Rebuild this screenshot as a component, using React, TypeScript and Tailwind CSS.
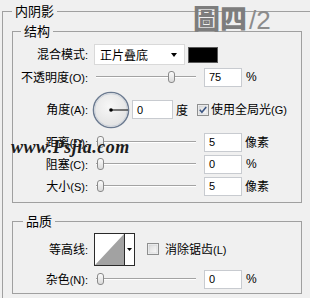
import React from "react";

const cjk = "font-['Noto_Sans_CJK_SC','Noto_Sans_CJK_TC',sans-serif]";
const latin = "font-['Liberation_Sans',sans-serif] text-[11px]";

function Label({ zh, key2 }: { zh: string; key2?: string }) {
  return (
    <span className="w-[75px] shrink-0 text-right text-[12px] leading-[14px] text-black">
      {zh}
      {key2 ? <span className={latin}>({key2})</span> : null}
      <span className={latin}>:</span>
    </span>
  );
}

function Slider({ value }: { value: number }) {
  return (
    <div className="relative flex h-[14px] w-[100px] shrink-0 items-center">
      <div className="h-[2px] w-full border-t border-[#a3a3a3] border-b border-b-white" />
      <div
        className="absolute top-[1px] h-[12px] w-[7px] rounded-[3px] border border-[#8a8a8a] bg-gradient-to-b from-[#fbfbfb] to-[#dadada]"
        style={{ left: 1 + value * 0.95 }}
      />
    </div>
  );
}

function NumBox({ v, w = "w-[38px]" }: { v: string; w?: string }) {
  return (
    <div className={`flex h-[19px] ${w} shrink-0 items-center border border-[#c8cbd0] bg-white pl-[4px] ${latin} leading-[12px]`}>
      {v}
    </div>
  );
}

function SliderRow({ zh, k, value, v, unit }: { zh: string; k: string; value: number; v: string; unit: string }) {
  return (
    <div className="flex h-[22px] items-center">
      <Label zh={zh} key2={k} />
      <div className="ml-[8px]">
        <Slider value={value} />
      </div>
      <div className="ml-[8px]">
        <NumBox v={v} />
      </div>
      <span
        className={
          unit === "%"
            ? `ml-[4px] ${latin} text-[12px]`
            : "ml-[3px] text-[12px] leading-[14px]"
        }
      >
        {unit}
      </span>
    </div>
  );
}

function CheckBox({ checked }: { checked?: boolean }) {
  return (
    <svg width="12" height="12" viewBox="0 0 12 12" className="shrink-0">
      <defs>
        <linearGradient id={checked ? "cbg1" : "cbg0"} x1="0" y1="0" x2="1" y2="1">
          <stop offset="0" stopColor="#dcdcdc" />
          <stop offset="1" stopColor="#fafafa" />
        </linearGradient>
      </defs>
      <rect x="0.5" y="0.5" width="11" height="11" fill="#f4f4f4" stroke="#8e8f8f" />
      <rect x="2" y="2" width="8" height="8" fill={`url(#${checked ? "cbg1" : "cbg0"})`} stroke="#c4c7cb" strokeWidth="0.5" />
      {checked ? (
        <path d="M2.8 5.8 L4.9 8.2 L9.2 2.9" fill="none" stroke="#3b5583" strokeWidth="1.6" />
      ) : null}
    </svg>
  );
}

function AngleDial() {
  return (
    <svg width="38" height="38" viewBox="0 0 38 38" className="shrink-0">
      <defs>
        <radialGradient id="dial" cx="0.45" cy="0.4" r="0.6">
          <stop offset="0" stopColor="#f7f7f7" />
          <stop offset="1" stopColor="#e2e2e2" />
        </radialGradient>
      </defs>
      <circle cx="19" cy="19" r="17.6" fill="url(#dial)" stroke="#6b7a90" strokeWidth="1.4" />
      <circle cx="19" cy="19" r="16.3" fill="none" stroke="#c7ced8" strokeWidth="0.8" />
      <line x1="19" y1="19" x2="36" y2="19" stroke="#000" strokeWidth="1" />
      <circle cx="19" cy="19" r="1.8" fill="#000" />
    </svg>
  );
}

function ContourPicker() {
  return (
    <div className="flex h-[33px] w-[41px] shrink-0 border border-[#2a2a2a] bg-white">
      <svg width="29" height="31" viewBox="0 0 29 31" className="shrink-0">
        <path d="M0 31 L29 0 L29 31 Z" fill="#a2a2a2" />
      </svg>
      <div className="flex flex-1 items-center justify-center border-l border-[#2a2a2a]">
        <svg width="5" height="3" viewBox="0 0 5 3">
          <path d="M0 0 L5 0 L2.5 3 Z" fill="#000" />
        </svg>
      </div>
    </div>
  );
}

export default function App() {
  return (
    <div className={`relative h-[298px] w-[310px] overflow-hidden bg-[#f0f0f0] ${cjk} text-black`}>
      <fieldset className="ml-[2px] mt-[4px] h-[330px] w-[330px] border border-[#a0a0a0]">
        <legend className="ml-[9px] px-[3px] text-[13px] leading-[14px]">内阴影</legend>

        <fieldset className="ml-[9px] mt-[6px] w-[290px] border border-[#a0a0a0] pb-[5px] pt-[5px]">
          <legend className="ml-[8px] px-[3px] text-[13px] leading-[14px]">结构</legend>

          <div className="flex h-[23px] items-center">
            <Label zh="混合模式" />
            <div className="ml-[6px] flex h-[21px] w-[91px] shrink-0 items-center justify-between border border-[#d9d9d9] bg-white pl-[5px] pr-[7px]">
              <span className="text-[12px] leading-[14px]">正片叠底</span>
              <svg width="6" height="4" viewBox="0 0 6 4">
                <path d="M0 0 L6 0 L3 4 Z" fill="#000" />
              </svg>
            </div>
            <div className="ml-[3px] h-[16px] w-[30px] shrink-0 border border-[#5a5a5a] bg-black" />
          </div>

          <SliderRow zh="不透明度" k="O" value={75} v="75" unit="%" />

          <div className="flex h-[43px] items-center">
            <Label zh="角度" key2="A" />
            <div className="ml-[4px]">
              <AngleDial />
            </div>
            <div className="ml-[2px]">
              <NumBox v="0" w="w-[41px]" />
            </div>
            <span className="ml-[3px] text-[12px] leading-[14px]">度</span>
            <div className="ml-[9px] flex items-center">
              <CheckBox checked />
            </div>
            <span className="ml-[2px] text-[12px] leading-[14px]">
              使用全局光<span className={latin}>(G)</span>
            </span>
          </div>

          <SliderRow zh="距离" k="D" value={0} v="5" unit="像素" />
          <SliderRow zh="阻塞" k="C" value={0} v="0" unit="%" />
          <SliderRow zh="大小" k="S" value={0} v="5" unit="像素" />
        </fieldset>

        <fieldset className="ml-[9px] mt-[11px] w-[290px] border border-[#a0a0a0] pb-[3px] pt-[2px]">
          <legend className="ml-[10px] px-[3px] text-[13px] leading-[14px]">品质</legend>

          <div className="flex h-[38px] items-center">
            <Label zh="等高线" />
            <div className="ml-[6px]">
              <ContourPicker />
            </div>
            <div className="ml-[12px] flex items-center">
              <CheckBox />
            </div>
            <span className="ml-[6px] text-[12px] leading-[14px]">
              消除锯齿<span className={latin}>(L)</span>
            </span>
          </div>

          <SliderRow zh="杂色" k="N" value={0} v="0" unit="%" />
        </fieldset>
      </fieldset>

      {/* watermarks laid over the dialog */}
      <div className="pointer-events-none absolute left-[193px] top-[3px] flex items-baseline">
        <span className="font-['Noto_Sans_CJK_TC',sans-serif] text-[27px] font-black leading-[30px] text-[#7d7d7d]">
          圖四
        </span>
        <span className="ml-[2px] font-['Liberation_Sans_Narrow','Liberation_Sans',sans-serif] text-[26px] font-light leading-[30px] text-[#8c8c8c]">
          /2
        </span>
      </div>
      <div className="pointer-events-none absolute left-[11px] top-[137px] font-['Liberation_Serif',serif] text-[18px] font-bold italic leading-[20px] tracking-[0.5px] text-[#1c1c1c]">
        www.Psjia.com
      </div>
    </div>
  );
}
